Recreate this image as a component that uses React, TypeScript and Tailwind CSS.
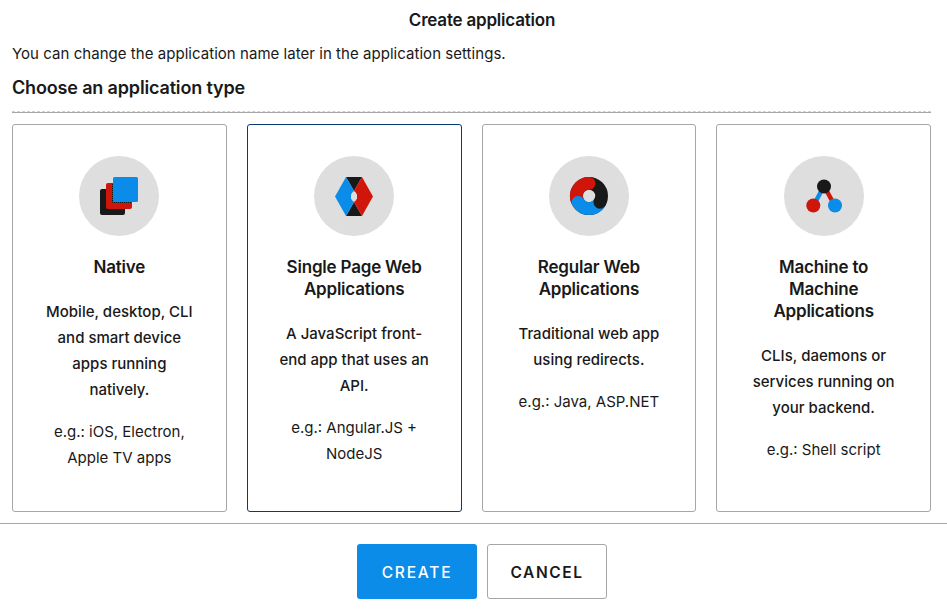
import type { ReactNode } from "react";

function NativeIcon() {
  return (
    <svg viewBox="0 0 80 80" className="size-20" shapeRendering="geometricPrecision">
      <circle cx="40" cy="40" r="40" fill="#dedede" />
      <rect x="21" y="33" width="25" height="26" rx="2" fill="#191919" />
      <rect x="27" y="27" width="26" height="26" rx="2" fill="#d0150b" />
      <path d="M33.5 28V46.5H52" fill="none" stroke="#191919" strokeDasharray="1 1" />
      <rect x="34" y="21" width="25" height="25" rx="1.5" fill="#0c8ce9" />
    </svg>
  );
}

function SinglePageIcon() {
  return (
    <svg viewBox="0 0 80 80" className="size-20">
      <circle cx="40" cy="40" r="40" fill="#dedede" />
      <path d="M32 21H48L40 35Z" fill="#191919" />
      <path d="M32 60H48L40 46Z" fill="#191919" />
      <path d="M32 21L40 35V46L32 60L21 40.5Z" fill="#0c8ce9" />
      <path d="M48 21L40 35V46L48 60L59 40.5Z" fill="#d0150b" />
      <path d="M39 35.5H41L43 38.5V42.5L41 45.5H39L37 42.5V38.5Z" fill="#dedede" />
    </svg>
  );
}

function RegularWebIcon() {
  return (
    <svg viewBox="0 0 80 80" className="size-20">
      <circle cx="40" cy="40" r="40" fill="#dedede" />
      <circle cx="40" cy="40" r="12.6" fill="none" stroke="#191919" strokeWidth="12.8" />
      <path d="M29.1 46.3A12.6 12.6 0 0 1 40 27.4" fill="none" stroke="#d0150b" strokeWidth="12.8" />
      <path d="M50.9 46.3A12.6 12.6 0 0 1 29.1 46.3" fill="none" stroke="#0c8ce9" strokeWidth="12.8" />
      <circle cx="40" cy="27.4" r="6.4" fill="#d0150b" />
      <circle cx="29.1" cy="46.3" r="6.4" fill="#0c8ce9" />
      <circle cx="50.9" cy="46.3" r="6.4" fill="#191919" />
    </svg>
  );
}

function MachineIcon() {
  return (
    <svg viewBox="0 0 80 80" className="size-20">
      <circle cx="40" cy="40" r="40" fill="#dedede" />
      <path d="M40 30L29.3 50" stroke="#0c8ce9" strokeWidth="4.5" />
      <path d="M40 30L51 50" stroke="#d0150b" strokeWidth="4.5" />
      <circle cx="40" cy="30.5" r="7" fill="#191919" />
      <circle cx="29.3" cy="49.5" r="7" fill="#d0150b" />
      <circle cx="51" cy="49.5" r="7" fill="#0c8ce9" />
    </svg>
  );
}

type AppType = {
  icon: ReactNode;
  title: string[];
  description: string[];
  example: string[];
  selected?: boolean;
};

const types: AppType[] = [
  {
    icon: <NativeIcon />,
    title: ["Native"],
    description: ["Mobile, desktop, CLI", "and smart device", "apps running", "natively."],
    example: ["e.g.: iOS, Electron,", "Apple TV apps"],
  },
  {
    icon: <SinglePageIcon />,
    title: ["Single Page Web", "Applications"],
    description: ["A JavaScript front-", "end app that uses an", "API."],
    example: ["e.g.: Angular.JS +", "NodeJS"],
    selected: true,
  },
  {
    icon: <RegularWebIcon />,
    title: ["Regular Web", "Applications"],
    description: ["Traditional web app", "using redirects."],
    example: ["e.g.: Java, ASP.NET"],
  },
  {
    icon: <MachineIcon />,
    title: ["Machine to", "Machine", "Applications"],
    description: ["CLIs, daemons or", "services running on", "your backend."],
    example: ["e.g.: Shell script"],
  },
];

function Lines({ items }: { items: string[] }) {
  return (
    <>
      {items.map((line) => (
        <span key={line} className="block whitespace-nowrap">
          {line}
        </span>
      ))}
    </>
  );
}

function TypeCard({ type }: { type: AppType }) {
  return (
    <button
      className={`flex flex-col items-center rounded-[3px] border pt-[31px] text-center ${
        type.selected ? "border-[#083b73]" : "border-[#a6a6a6]"
      }`}
    >
      {type.icon}
      <h3 className="mt-5 text-[17px] leading-[22px] font-semibold tracking-[-0.2px]">
        <Lines items={type.title} />
      </h3>
      <p className="mt-[21px] text-[15px] leading-[26px] font-medium">
        <Lines items={type.description} />
      </p>
      <p className="mt-4 text-[15px] leading-[26px]">
        <Lines items={type.example} />
      </p>
    </button>
  );
}

export default function App() {
  return (
    <main className="flex h-[616px] w-[947px] flex-col overflow-hidden bg-white font-['Inter',sans-serif] text-[#191919]">
      <section className="flex h-[524px] flex-col border-b border-[#a6a6a6] pr-4 pl-3">
        <h1 className="mt-2 pl-[21px] text-center text-[17px] leading-6 font-semibold tracking-[-0.2px]">
          Create application
        </h1>
        <p className="mt-2.5 text-[15px] leading-6 tracking-[0.04px]">
          You can change the application name later in the application settings.
        </p>
        <h2 className="mt-2.5 text-[18px] leading-6 font-semibold tracking-[-0.16px]">
          Choose an application type
        </h2>
        <div className="mt-[11px] h-0.5">
          <div className="border-t border-dashed border-[#d0d0d0]" />
          <div className="border-t border-[#a6a6a6]" />
        </div>
        <div className="mt-[11px] grid h-[388px] grid-cols-4 gap-5">
          {types.map((type) => (
            <TypeCard key={type.title.join(" ")} type={type} />
          ))}
        </div>
      </section>
      <footer className="flex justify-center gap-2.5 pt-5 pl-[17px]">
        <button className="h-[55px] w-[120px] rounded-[3px] bg-[#0c8ce9] pt-0.5 text-[15.5px] font-medium tracking-[1.8px] text-white">
          CREATE
        </button>
        <button className="h-[55px] w-[120px] rounded-[3px] border border-[#a6a6a6] pt-0.5 text-[15.5px] font-semibold tracking-[1.6px]">
          CANCEL
        </button>
      </footer>
    </main>
  );
}
